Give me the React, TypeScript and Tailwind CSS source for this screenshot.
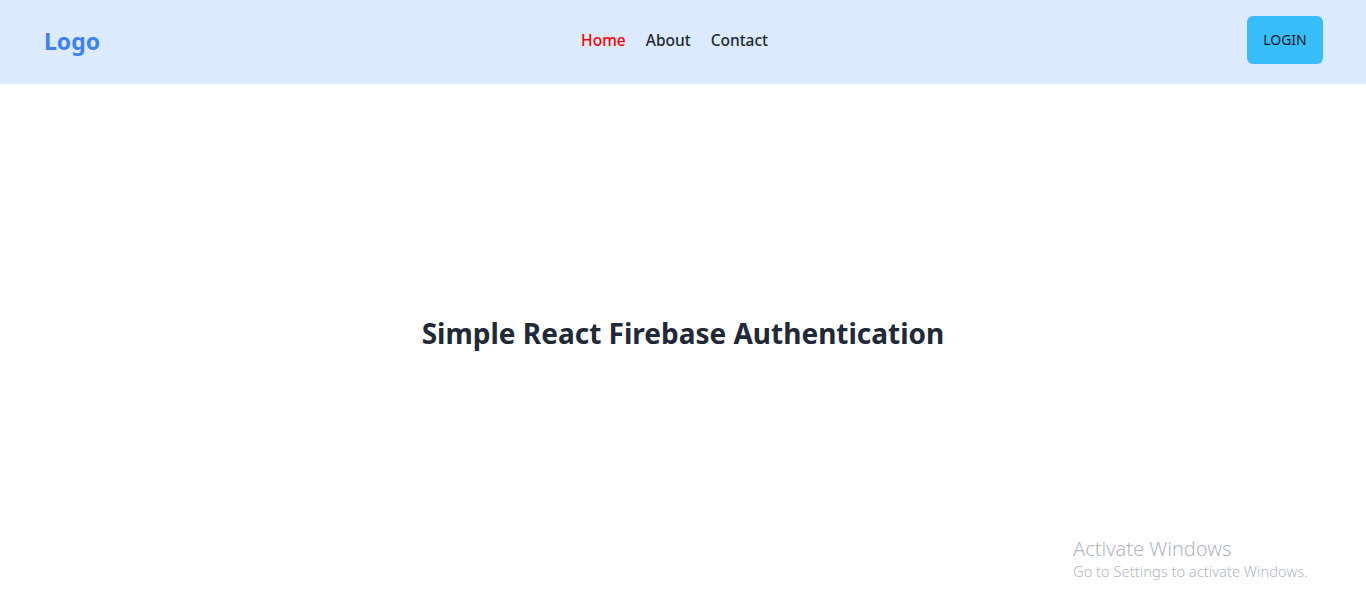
import React from "react"

const font = { fontFamily: '"Noto Sans", "Open Sans", sans-serif' }

function Navbar() {
  return (
    <header className="h-[84px] bg-[#dbeafe] pl-11 pr-[43px] pb-1 flex items-center justify-between">
      <a href="#" className="text-[23px] font-bold text-[#3b82f6] mt-[3px]">
        Logo
      </a>
      <nav className="flex items-center gap-5 text-[15.5px] font-medium text-[#1f2937] ml-[2px] mt-[2px]">
        <a href="#" className="text-[#ff0000]">Home</a>
        <a href="#">About</a>
        <a href="#">Contact</a>
      </nav>
      <button className="w-[76px] h-12 bg-[#38bdf8] rounded-md text-sm text-[#111827]">
        LOGIN
      </button>
    </header>
  )
}

export default function App() {
  return (
    <div className="min-h-[608px] bg-white relative" style={font}>
      <Navbar />
      <main className="flex justify-center pt-[228px]">
        <h1 className="text-[28px] font-bold text-[#1f2937]">Simple React Firebase Authentication</h1>
      </main>
      <div className="absolute left-[1073px] top-[537px] text-[#9ca3af]/80">
        <p className="text-xl font-light leading-6">Activate Windows</p>
        <p className="text-[14.7px] font-light leading-5">Go to Settings to activate Windows.</p>
      </div>
    </div>
  )
}
